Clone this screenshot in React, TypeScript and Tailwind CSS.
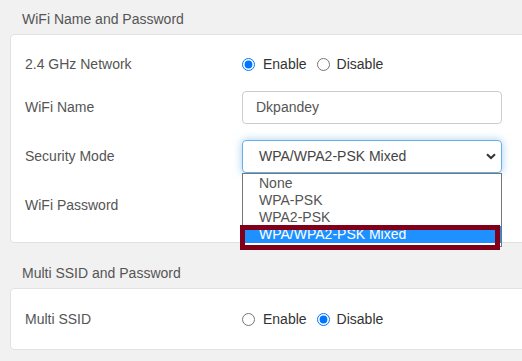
import React from "react";

const font = { fontFamily: '"Liberation Sans", Arial, sans-serif' };

function Radio({ checked }: { checked: boolean }) {
  return (
    <input
      type="radio"
      checked={checked}
      readOnly
      className="m-0 h-[13px] w-[13px] shrink-0"
    />
  );
}

function RadioPair({ enabled }: { enabled: boolean }) {
  return (
    <div className="flex h-[20px] items-center text-[14px] text-[#333]">
      <Radio checked={enabled} />
      <span className="ml-[8px]">Enable</span>
      <span className="ml-[10px] flex items-center">
        <Radio checked={!enabled} />
        <span className="ml-[7px]">Disable</span>
      </span>
    </div>
  );
}

function Row({ label, children, last }: { label: string; children: React.ReactNode; last?: boolean }) {
  return (
    <div className={`flex items-center ${last ? "" : "mb-[16px]"}`}>
      <div className="w-[217px] shrink-0 text-[14px] text-[#555]">{label}</div>
      <div className="relative">{children}</div>
    </div>
  );
}

export default function App() {
  const options = ["None", "WPA-PSK", "WPA2-PSK", "WPA/WPA2-PSK Mixed"];
  return (
    <div className="h-[361px] w-full overflow-hidden bg-[#f1f1f1]" style={font}>
      <div className="ml-[10px] w-[540px]">
        <div className="pl-[12px] pt-[11px] pb-[7px] text-[14px] leading-[16px] text-[#555]">
          WiFi Name and Password
        </div>
        <div className="rounded-[4px] border border-[#e2e2e2] bg-white pl-[14px] pt-[19px] pb-[20px]">
          <Row label="2.4 GHz Network">
            <RadioPair enabled={true} />
          </Row>
          <Row label="WiFi Name">
            <div className="flex h-[33px] w-[260px] items-center rounded-[4px] border border-[#cccccc] pl-[13px] text-[14px] text-[#555]">
              Dkpandey
            </div>
          </Row>
          <Row label="Security Mode">
            <div className="flex h-[33px] w-[260px] items-center justify-between rounded-[4px] border border-[#66afe9] pl-[16px] pr-[5px] text-[14px] text-[#444] shadow-[0_0_8px_rgba(102,175,233,0.6)]">
              <span>WPA/WPA2-PSK Mixed</span>
              <svg width="10" height="7" viewBox="0 0 10 7" className="mr-[0px]">
                <path d="M1 1.2 L5 5 L9 1.2" fill="none" stroke="#333" strokeWidth="2" />
              </svg>
            </div>
            <div className="absolute left-0 top-[33px] z-10 w-[260px] border border-[#767676] bg-white pt-[1px] pb-[3px] text-[14px]">
              {options.map((o, i) => (
                <div
                  key={o}
                  className={`flex h-[17px] items-center pl-[16px] ${
                    i === 3 ? "bg-[#1e90ff] text-white" : "text-[#555]"
                  }`}
                >
                  {o}
                </div>
              ))}
              <div className="absolute left-[-3px] top-[51px] h-[25px] w-[260px] border-[5px] border-[#80001a]" />
            </div>
          </Row>
          <Row label="WiFi Password" last>
            <div className="h-[33px] w-[260px] rounded-[4px] border border-[#cccccc]" />
          </Row>
        </div>
        <div className="pl-[12px] pt-[22px] pb-[7px] text-[14px] leading-[16px] text-[#555]">
          Multi SSID and Password
        </div>
        <div className="rounded-[4px] border border-[#e2e2e2] bg-white pl-[14px] pt-[20px] pb-[19px]">
          <Row label="Multi SSID" last>
            <RadioPair enabled={false} />
          </Row>
        </div>
      </div>
    </div>
  );
}
